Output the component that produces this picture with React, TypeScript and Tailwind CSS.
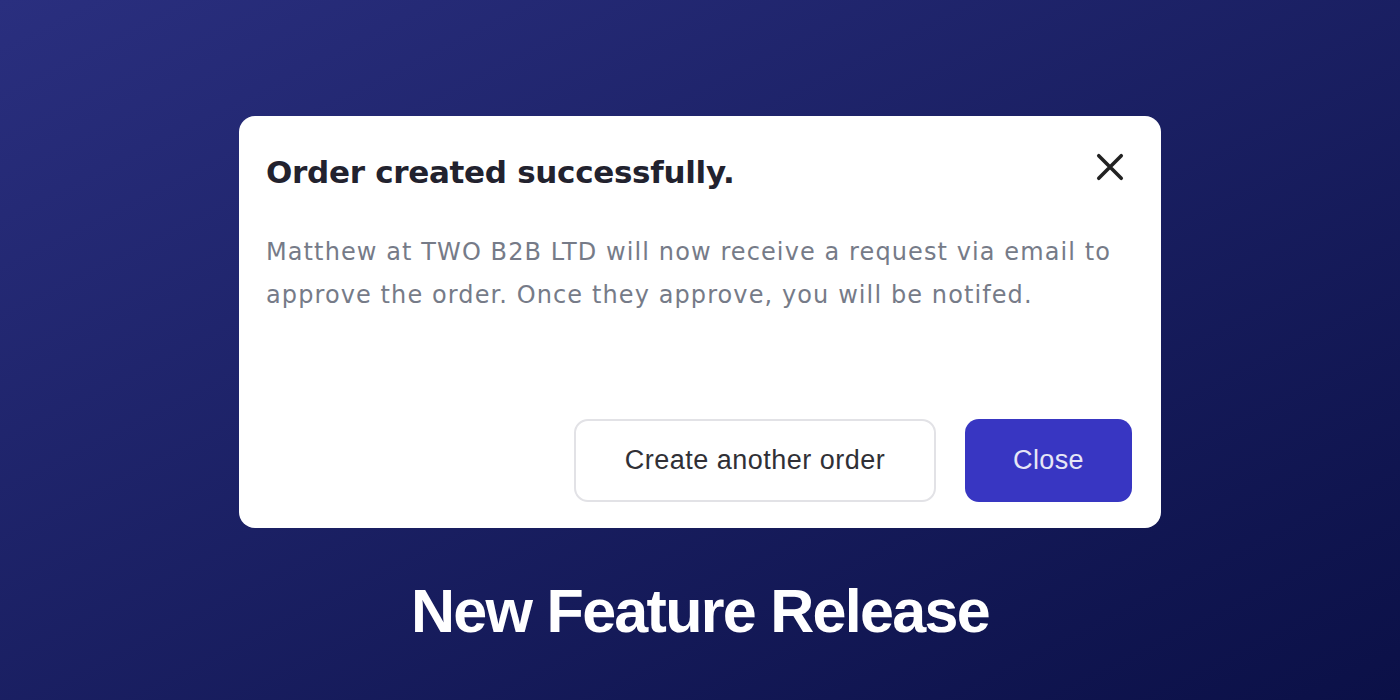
export default function App() {
  return (
    <div className="flex h-[700px] w-[1400px] flex-col items-center bg-gradient-to-br from-[#2a2f7f] to-[#0b1047] font-['Liberation_Sans',Arial,sans-serif]">
      <div className="mt-[116px] flex h-[412px] w-[922px] flex-col rounded-[16px] bg-white pl-[27px] pr-[29px]">
        <div className="mt-[36px] flex items-start justify-between">
          <h2 className="font-['DejaVu_Sans',sans-serif] text-[31px] font-bold leading-[40px] tracking-[-0.3px] text-[#22222e]">
            Order created successfully.
          </h2>
          <button type="button" className="-mt-[3px] mr-[4px] text-[#222]">
            <svg width="36" height="36" viewBox="0 0 24 24" fill="none" stroke="currentColor" strokeWidth="2.4" strokeLinecap="round">
              <path d="M4.5 4.5l15 15M19.5 4.5l-15 15" />
            </svg>
          </button>
        </div>
        <p className="mt-[39px] w-[880px] font-['DejaVu_Sans',sans-serif] text-[24px] leading-[43px] tracking-[1.1px] text-[#767b88]">
          Matthew at TWO B2B LTD will now receive a request via email to approve the order. Once they approve, you will be notifed.
        </p>
        <div className="mt-auto mb-[26px] flex justify-end gap-[29px]">
          <button
            type="button"
            className="h-[83px] w-[362px] rounded-[14px] border-2 border-[#e2e2e6] text-[27px] tracking-[0.5px] text-[#303036]"
          >
            Create another order
          </button>
          <button
            type="button"
            className="h-[83px] w-[167px] rounded-[14px] bg-[#3836c2] text-[27px] tracking-[0.4px] text-[#e6e6f6]"
          >
            Close
          </button>
        </div>
      </div>
      <h1 className="mt-[48px] text-[61px] font-bold leading-[70px] tracking-[-1.7px] text-white">
        New Feature Release
      </h1>
    </div>
  );
}
